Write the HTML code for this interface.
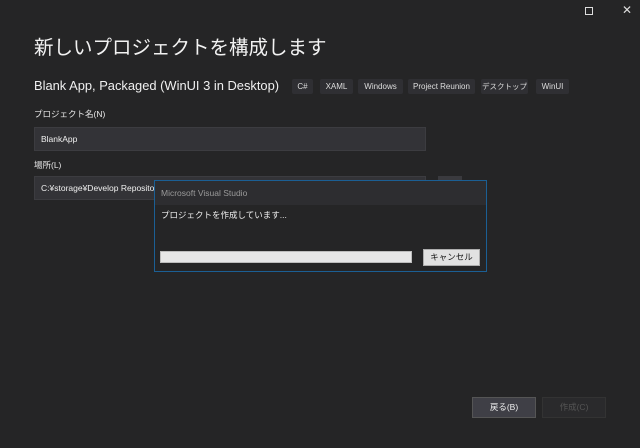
<!DOCTYPE html><html><head><meta charset="utf-8"><style>
*{margin:0;padding:0;box-sizing:border-box}
body{width:640px;height:448px;background:#252526;position:relative;overflow:hidden;font-family:"Liberation Sans","Noto Sans CJK JP",sans-serif;color:#e8e8e8}
.a{position:absolute;white-space:nowrap}
.tag{position:absolute;top:79px;height:15px;background:#2f2f33;border-radius:2px;font-size:8px;line-height:15px;text-align:center;color:#ddd;white-space:nowrap;overflow:hidden}
.inp{position:absolute;left:34px;width:392px;height:24px;background:#333337;border:1px solid #3c3c40;font-size:8.5px;line-height:22px;padding-left:6px;color:#f0f0f0;white-space:nowrap;overflow:hidden}
</style></head><body>
<div class="a" style="left:585px;top:7px;width:8px;height:8px;border:1px solid #ddd"></div>
<div class="a" style="left:622px;top:3px;font-size:12px;color:#ddd">✕</div>
<div class="a" style="left:34px;top:31px;font-size:19.5px;color:#f2f2f2">新しいプロジェクトを構成します</div>
<div class="a" style="left:34px;top:78px;font-size:12.9px;color:#f0f0f0">Blank App, Packaged (WinUI 3 in Desktop)</div>
<div class="tag" style="left:292px;width:21px">C#</div>
<div class="tag" style="left:320px;width:33px">XAML</div>
<div class="tag" style="left:358px;width:45px">Windows</div>
<div class="tag" style="left:408px;width:67px">Project Reunion</div>
<div class="tag" style="left:481px;width:47px;font-size:7.5px">デスクトップ</div>
<div class="tag" style="left:536px;width:33px">WinUI</div>
<div class="a" style="left:34px;top:108px;font-size:8.5px">プロジェクト名(N)</div>
<div class="inp" style="top:127px">BlankApp</div>
<div class="a" style="left:34px;top:159px;font-size:8.5px">場所(L)</div>
<div class="inp" style="top:176px">C:¥storage¥Develop Repository</div>
<div class="a" style="left:438px;top:176px;width:24px;height:24px;background:#3a3a3e"></div>
<div class="a" style="left:154px;top:180px;width:333px;height:92px;background:#252526;border:1px solid #1b5f94">
<div style="height:24px;background:#2d2d30;font-size:8.5px;line-height:24px;padding-left:6px;color:#9a9a9a">Microsoft Visual Studio</div>
<div class="a" style="left:6px;top:28px;font-size:8.5px;color:#eee">プロジェクトを作成しています...</div>
<div class="a" style="left:5px;top:70px;width:252px;height:12px;background:#e6e6e6;border:1px solid #bcbcbc"></div>
<div class="a" style="left:268px;top:68px;width:57px;height:17px;background:#e1e1e1;border:1px solid #adadad;font-size:8.5px;line-height:15px;text-align:center;color:#111">キャンセル</div>
</div>
<div class="a" style="left:472px;top:397px;width:64px;height:21px;background:#3f3f46;border:1px solid #555;font-size:8.5px;line-height:19px;text-align:center;color:#eee">戻る(B)</div>
<div class="a" style="left:542px;top:397px;width:64px;height:21px;background:#2a2a2c;border:1px solid #333;font-size:8.5px;line-height:19px;text-align:center;color:#555">作成(C)</div>
</body></html>
